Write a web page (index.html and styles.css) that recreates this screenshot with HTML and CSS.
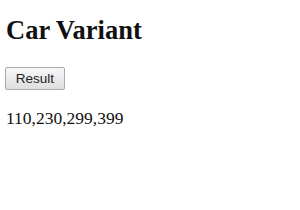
FILE: index.html
```html
<!DOCTYPE html>
<html lang="en">
<head>
    <meta charset="UTF-8">
    <title>Car Variant</title>
    <link rel="stylesheet" href="styles.css">
</head>
<body>
    <h1>Car Variant</h1>
    <button id="result-btn">Result</button>
    <p id="output">110,230,299,399</p>
</body>
</html>
```

FILE: styles.css
```css
body {
    margin: 0;
    padding: 15px 6px;
    font-family: "Liberation Serif", "Times New Roman", serif;
    font-size: 17.5px;
    color: #111;
}

h1 {
    margin: 0 0 21px;
    font-size: 26.5px;
    line-height: 31px;
}

button {
    display: block;
    width: 60px;
    height: 23px;
    margin-left: -1px;
    padding: 0;
    font-family: "Liberation Sans", Arial, sans-serif;
    font-size: 13.5px;
    color: #222;
    background: linear-gradient(#f7f7f7, #dedede);
    border: 1px solid #a9a9a9;
    border-radius: 2px;
}

p {
    margin: 18px 0 0;
    line-height: 20px;
}
```
